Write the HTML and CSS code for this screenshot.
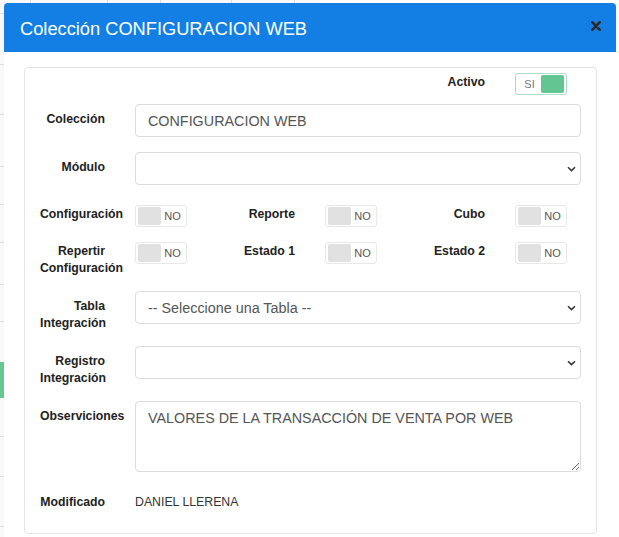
FILE: index.html
```html
<!DOCTYPE html>
<html lang="es">
<head>
<meta charset="utf-8">
<title>Colección CONFIGURACION WEB</title>
<link rel="stylesheet" href="styles.css">
</head>
<body>
<div class="backdrop">
  <div class="bg-row bg-head">
    <span class="bg-cell c1"></span><span class="bg-cell c2"></span><span class="bg-cell c3"></span><span class="bg-cell c4"></span><span class="bg-cell c5"></span><span class="bg-cell c6"></span>
  </div>
  <div class="bg-row"></div>
  <div class="bg-row h50"></div>
  <div class="bg-row h52"></div>
  <div class="bg-row h38"></div>
  <div class="bg-row h38"></div>
  <div class="bg-row h42"></div>
  <div class="bg-row h37"></div>
  <div class="bg-row h40 no-line"></div>
  <div class="bg-row h36 green"></div>
  <div class="bg-row h39"></div>
  <div class="bg-row h40"></div>
  <div class="bg-row h50"></div>
</div>

<div class="modal">
  <div class="modal-header">
    <h4 class="modal-title">Colección CONFIGURACION WEB</h4>
    <button class="close" aria-label="Cerrar">
      <svg width="10" height="10" viewBox="0 0 10 10"><path d="M1.2 1.2 L8.8 8.8 M8.8 1.2 L1.2 8.8" stroke="#2a2a2a" stroke-width="2.6" stroke-linecap="round"/></svg>
    </button>
  </div>
  <div class="modal-body">
    <div class="card">
      <div class="switch-row first">
        <div class="group"></div>
        <div class="group"></div>
        <div class="group">
          <label class="lbl">Activo</label>
          <span class="toggle on"><span class="t-text">SI</span><span class="knob"></span></span>
        </div>
      </div>

      <div class="field">
        <label class="lbl pad">Colección</label>
        <input class="control" type="text" value="CONFIGURACION WEB">
      </div>

      <div class="field wide-gap">
        <label class="lbl pad">Módulo</label>
        <div class="control select"><span class="sel-text"></span>
          <svg class="chev" width="9" height="6" viewBox="0 0 9 6"><path d="M1 1.2 L4.5 4.6 L8 1.2" fill="none" stroke="#333" stroke-width="1.5"/></svg>
        </div>
      </div>

      <div class="switch-row">
        <div class="group">
          <label class="lbl">Configuración</label>
          <span class="toggle"><span class="knob"></span><span class="t-text">NO</span></span>
        </div>
        <div class="group">
          <label class="lbl">Reporte</label>
          <span class="toggle"><span class="knob"></span><span class="t-text">NO</span></span>
        </div>
        <div class="group">
          <label class="lbl">Cubo</label>
          <span class="toggle"><span class="knob"></span><span class="t-text">NO</span></span>
        </div>
      </div>

      <div class="switch-row">
        <div class="group">
          <label class="lbl">Repertir Configuración</label>
          <span class="toggle"><span class="knob"></span><span class="t-text">NO</span></span>
        </div>
        <div class="group">
          <label class="lbl">Estado 1</label>
          <span class="toggle"><span class="knob"></span><span class="t-text">NO</span></span>
        </div>
        <div class="group">
          <label class="lbl">Estado 2</label>
          <span class="toggle"><span class="knob"></span><span class="t-text">NO</span></span>
        </div>
      </div>

      <div class="field">
        <label class="lbl pad">Tabla Integración</label>
        <div class="control select"><span class="sel-text">-- Seleccione una Tabla --</span>
          <svg class="chev" width="9" height="6" viewBox="0 0 9 6"><path d="M1 1.2 L4.5 4.6 L8 1.2" fill="none" stroke="#333" stroke-width="1.5"/></svg>
        </div>
      </div>

      <div class="field">
        <label class="lbl pad">Registro Integración</label>
        <div class="control select"><span class="sel-text"></span>
          <svg class="chev" width="9" height="6" viewBox="0 0 9 6"><path d="M1 1.2 L4.5 4.6 L8 1.2" fill="none" stroke="#333" stroke-width="1.5"/></svg>
        </div>
      </div>

      <div class="field">
        <label class="lbl pad">Observiciones</label>
        <textarea class="control area">VALORES DE LA TRANSACCIÓN DE VENTA POR WEB</textarea>
      </div>

      <div class="field last">
        <label class="lbl pad">Modificado</label>
        <span class="static">DANIEL LLERENA</span>
      </div>
    </div>
  </div>
</div>
</body>
</html>
```

FILE: styles.css
```css
* { box-sizing: border-box; }

html, body {
  margin: 0;
  height: 100%;
  overflow: hidden;
}

body {
  background: #fff;
  font-family: "Liberation Sans", Arial, sans-serif;
  color: #333;
  position: relative;
}

/* background table (behind the modal) */
.backdrop {
  display: flex;
  flex-direction: column;
  width: 320px;
  height: 100%;
  background: #f8f8f8;
}
.bg-row {
  border-bottom: 1px solid #dedede;
  height: 51px;
  flex: none;
}
.bg-head {
  height: 14px;
  display: flex;
}
.bg-cell {
  border-right: 1px solid #dcdcdc;
  height: 100%;
  flex: none;
}
.c1 { width: 31px; }
.c2 { width: 77px; }
.c3 { width: 53px; }
.c4 { width: 71px; }
.c5 { width: 63px; }
.c6 { flex: 1; border-right: none; }
.h50 { height: 50px; }
.h52 { height: 52px; }
.h38 { height: 38px; }
.h42 { height: 42px; }
.h37 { height: 37px; }
.h40 { height: 40px; }
.h36 { height: 36px; }
.h39 { height: 39px; }
.no-line { border-bottom: none; }
.green { background: #66c795; border-bottom: none; }

/* modal */
.modal {
  position: absolute;
  left: 4px;
  top: 3px;
  width: 612px;
  bottom: -20px;
  background: #fff;
  border-radius: 4px 4px 0 0;
}
.modal-header {
  height: 49px;
  background: #137fe4;
  border-radius: 4px 4px 0 0;
  display: flex;
  align-items: center;
  justify-content: space-between;
  padding: 3px 15px 0 16px;
}
.modal-title {
  margin: 0;
  font-size: 18.25px;
  font-weight: normal;
  color: #fff;
  line-height: 22px;
}
.close {
  border: none;
  background: none;
  padding: 0;
  margin: 0 0 7px 0;
  width: 10px;
  height: 10px;
  display: flex;
}

.modal-body {
  padding: 15px 19px 0 20px;
}
.card {
  border: 1px solid #e4e4e4;
  border-radius: 4px;
  padding: 5px 15px 22px 15px;
}

.lbl {
  width: 65px;
  flex: none;
  text-align: right;
  font-weight: bold;
  font-size: 12.25px;
  line-height: 17px;
  color: #222;
}
.lbl.pad { padding-top: 7px; margin-bottom: -1px; }

.field {
  display: flex;
  gap: 30px;
  margin-bottom: 15px;
}
.field.wide-gap { margin-bottom: 20px; }
.field.last { margin-bottom: 0; }

.control {
  flex: 1;
  height: 33px;
  border: 1px solid #dcdcdc;
  border-radius: 4px;
  background: #fff;
  font-family: "Liberation Sans", Arial, sans-serif;
  font-size: 14.35px;
  color: #555;
  padding: 0 12px;
  margin: 0;
  outline: none;
}
.select {
  display: flex;
  align-items: center;
  justify-content: space-between;
  padding: 0 4px 0 12px;
}
.chev { flex: none; margin-top: 1px; }
.area {
  height: 71px;
  padding: 6px 12px;
  line-height: 20px;
  resize: vertical;
}
.static {
  padding-top: 7px;
  font-size: 12.3px;
  line-height: 17px;
  color: #333;
}

/* toggle rows */
.switch-row {
  display: grid;
  grid-template-columns: 190px 190px 1fr;
  margin-bottom: 15px;
}
.switch-row.first { margin-bottom: 9px; }
.group {
  display: flex;
  gap: 30px;
  align-items: flex-start;
}
.switch-row .lbl { padding-top: 1px; margin-bottom: -1px; }

.toggle {
  flex: none;
  width: 52px;
  height: 22px;
  border: 1px solid #e8e8e8;
  border-radius: 3px;
  padding: 1px 2px;
  display: flex;
  align-items: center;
  background: #fff;
}
.toggle .knob {
  width: 23px;
  height: 18px;
  background: #e1e1e1;
  border-radius: 2px;
  flex: none;
}
.toggle .t-text {
  flex: 1;
  text-align: center;
  font-size: 11px;
  color: #555;
  line-height: 18px;
}
.toggle.on {
  border-color: #a6e0c1;
}
.toggle.on .knob { background: #63c692; }
.toggle.on .t-text { color: #777; }
```
